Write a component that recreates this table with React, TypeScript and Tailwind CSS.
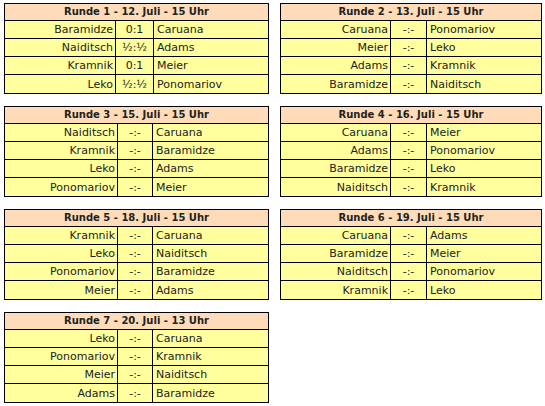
import React from "react";

type Game = [string, string, string];
type Round = { title: string; games: Game[]; c1: number; c2: number; w: number };

const rounds: Round[] = [
  { title: "Runde 1 - 12. Juli - 15 Uhr", c1: 110, c2: 37, w: 265, games: [["Baramidze", "0:1", "Caruana"], ["Naiditsch", "½:½", "Adams"], ["Kramnik", "0:1", "Meier"], ["Leko", "½:½", "Ponomariov"]] },
  { title: "Runde 2 - 13. Juli - 15 Uhr", c1: 109, c2: 35, w: 262, games: [["Caruana", "-:-", "Ponomariov"], ["Meier", "-:-", "Leko"], ["Adams", "-:-", "Kramnik"], ["Baramidze", "-:-", "Naiditsch"]] },
  { title: "Runde 3 - 15. Juli - 15 Uhr", c1: 112, c2: 34, w: 265, games: [["Naiditsch", "-:-", "Caruana"], ["Kramnik", "-:-", "Baramidze"], ["Leko", "-:-", "Adams"], ["Ponomariov", "-:-", "Meier"]] },
  { title: "Runde 4 - 16. Juli - 15 Uhr", c1: 109, c2: 35, w: 262, games: [["Caruana", "-:-", "Meier"], ["Adams", "-:-", "Ponomariov"], ["Baramidze", "-:-", "Leko"], ["Naiditsch", "-:-", "Kramnik"]] },
  { title: "Runde 5 - 18. Juli - 15 Uhr", c1: 112, c2: 34, w: 265, games: [["Kramnik", "-:-", "Caruana"], ["Leko", "-:-", "Naiditsch"], ["Ponomariov", "-:-", "Baramidze"], ["Meier", "-:-", "Adams"]] },
  { title: "Runde 6 - 19. Juli - 15 Uhr", c1: 109, c2: 35, w: 262, games: [["Caruana", "-:-", "Adams"], ["Baramidze", "-:-", "Meier"], ["Naiditsch", "-:-", "Ponomariov"], ["Kramnik", "-:-", "Leko"]] },
  { title: "Runde 7 - 20. Juli - 13 Uhr", c1: 112, c2: 34, w: 265, games: [["Leko", "-:-", "Caruana"], ["Ponomariov", "-:-", "Kramnik"], ["Meier", "-:-", "Naiditsch"], ["Adams", "-:-", "Baramidze"]] },
];

function RoundTable({ r }: { r: Round }) {
  return (
    <div className="border border-black bg-[#ffff9e] text-[11px] leading-none text-[#222]" style={{ width: r.w }}>
      <div className="h-[17px] border-b border-black bg-[#fedcb9] flex items-center justify-center font-bold text-[10px]">
        {r.title}
      </div>
      {r.games.map((g, i) => (
        <div key={i} className={"flex h-[18px] " + (i < 3 ? "border-b border-black" : "")}>
          <div className="flex items-center justify-end pr-[2px] border-r border-black" style={{ width: r.c1 + 1 }}>
            {g[0]}
          </div>
          <div className="flex items-center justify-center border-r border-black" style={{ width: r.c2 + 1 }}>
            {g[1]}
          </div>
          <div className="flex-1 flex items-center pl-[3px]">{g[2]}</div>
        </div>
      ))}
    </div>
  );
}

export default function App() {
  return (
    <div
      className="w-[545px] h-[406px] bg-white pt-[3px] pl-[4px]"
      style={{ fontFamily: '"DejaVu Sans", Verdana, sans-serif' }}
    >
      <div className="grid grid-cols-[265px_262px] gap-x-[11px] gap-y-[12px]">
        {rounds.map((r, i) => (
          <RoundTable key={i} r={r} />
        ))}
      </div>
    </div>
  );
}
